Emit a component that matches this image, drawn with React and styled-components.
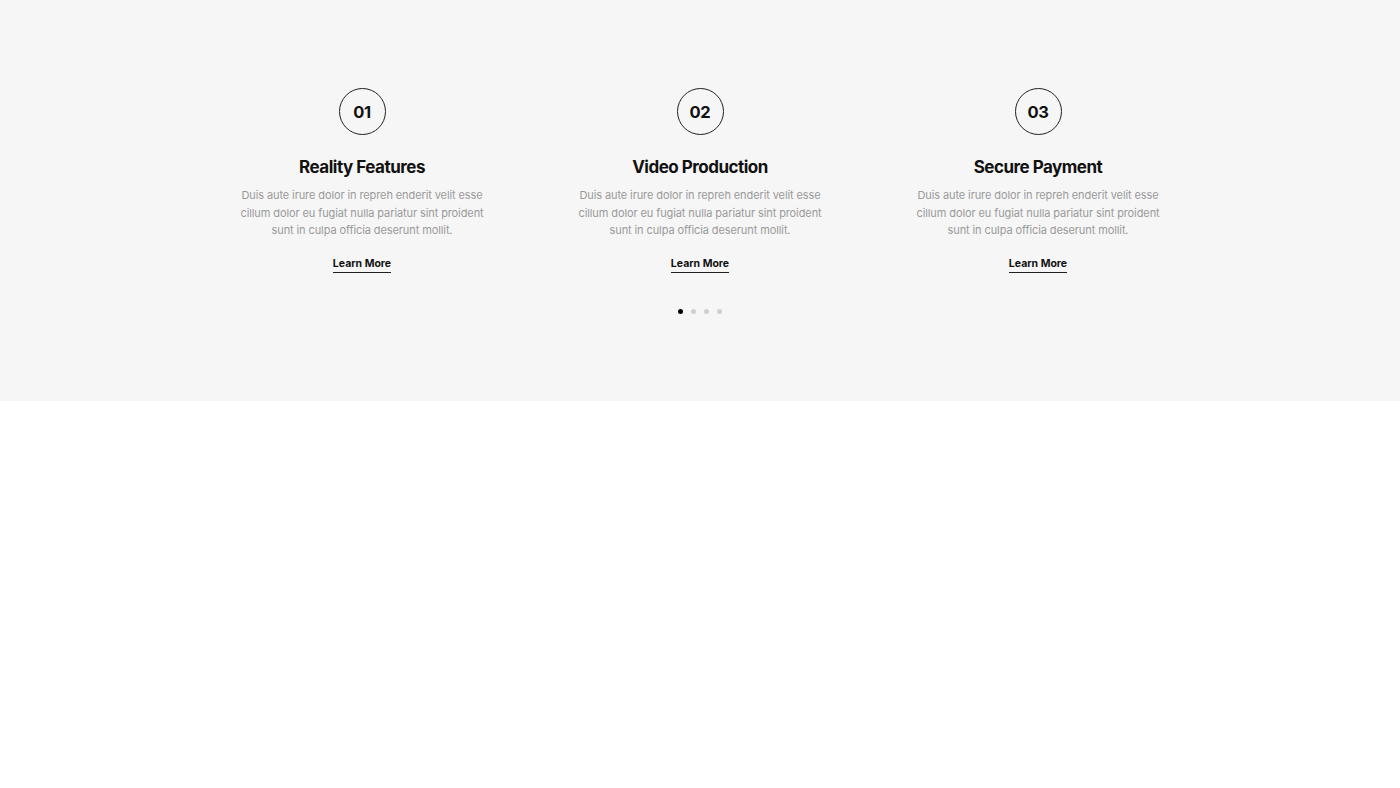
import React from 'react';
import styled, { createGlobalStyle } from 'styled-components';

const GlobalStyle = createGlobalStyle`
  html, body {
    margin: 0;
    padding: 0;
    background: #ffffff;
  }
  body {
    font-family: Inter, "Open Sans", "Liberation Sans", sans-serif;
  }
`;

const Section = styled.section`
  background: #f6f6f6;
  padding: 88px 0 86px;
  height: 401px;
  box-sizing: border-box;
`;

const Grid = styled.div`
  display: grid;
  grid-template-columns: repeat(3, 338px);
  justify-content: center;
`;

const Card = styled.div`
  display: flex;
  flex-direction: column;
  align-items: center;
  text-align: center;
`;

const Number = styled.div`
  width: 45px;
  height: 45px;
  border: 1px solid #222;
  border-radius: 50%;
  display: flex;
  align-items: center;
  justify-content: center;
  font-size: 16.5px;
  font-weight: 700;
  color: #111;
  letter-spacing: -0.3px;
`;

const Title = styled.h3`
  margin: 20px 0 0;
  font-size: 17px;
  line-height: 24px;
  font-weight: 700;
  color: #111;
  letter-spacing: -0.5px;
`;

const Text = styled.p`
  margin: 8px 0 0;
  width: 260px;
  font-size: 11px;
  line-height: 17.5px;
  color: #9a9a9a;
  letter-spacing: -0.1px;
`;

const More = styled.a`
  margin-top: 17px;
  font-size: 10.5px;
  font-weight: 700;
  color: #111;
  text-decoration: none;
  padding-bottom: 1px;
  border-bottom: 1px solid #222;
  line-height: 14px;
`;

const Dots = styled.div`
  display: flex;
  justify-content: center;
  gap: 8px;
  margin-top: 36px;
`;

const Dot = styled.span`
  width: 5px;
  height: 5px;
  border-radius: 50%;
  background: ${p => (p.$active ? '#000' : '#cfcfcf')};
`;

const items = [
  { n: '01', title: 'Reality Features' },
  { n: '02', title: 'Video Production' },
  { n: '03', title: 'Secure Payment' },
];

export default function App() {
  return (
    <>
      <GlobalStyle />
      <Section>
        <Grid>
          {items.map(it => (
            <Card key={it.n}>
              <Number>{it.n}</Number>
              <Title>{it.title}</Title>
              <Text>
                Duis aute irure dolor in repreh enderit velit esse cillum dolor eu fugiat nulla pariatur sint proident sunt in culpa officia deserunt mollit.
              </Text>
              <More href="#">Learn More</More>
            </Card>
          ))}
        </Grid>
        <Dots>
          <Dot $active />
          <Dot />
          <Dot />
          <Dot />
        </Dots>
      </Section>
    </>
  );
}
